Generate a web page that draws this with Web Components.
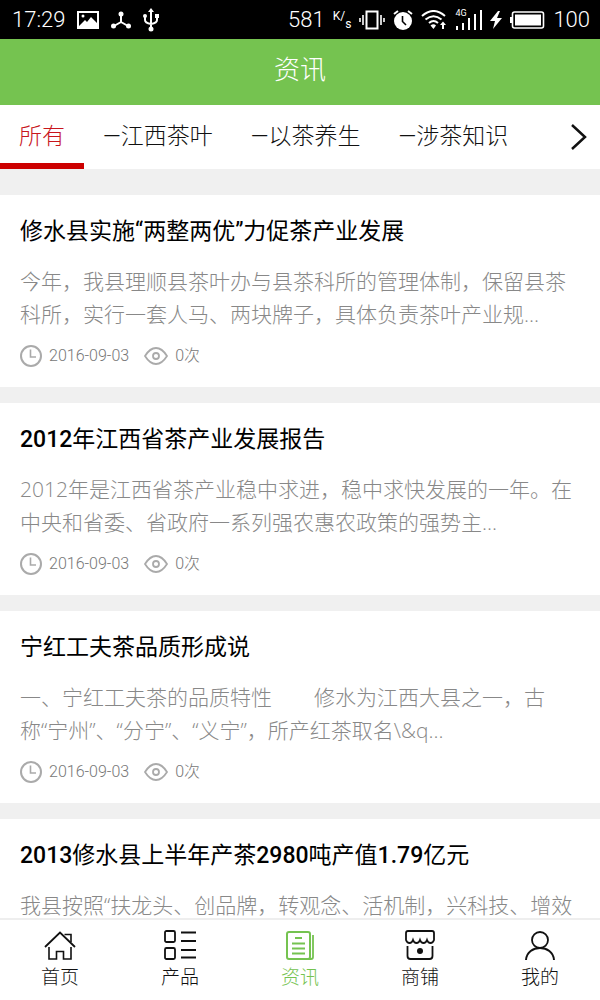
<!DOCTYPE html>
<html lang="zh-CN">
<head>
<meta charset="utf-8">
<meta name="viewport" content="width=device-width, initial-scale=1">
<title>资讯</title>
<style>
html, body {
    margin: 0;
    height: 100%;
}
body {
    font-family: Roboto, "Noto Sans CJK SC", sans-serif;
    color: #111;
    background: #f0f0f0;
}
b {
    font-weight: 500;
}
</style>
</head>
<body>
<news-app>
    <status-bar slot="top" time="17:29" speed="581" battery="100"></status-bar>
    <title-bar slot="top">资讯</title-bar>
    <tab-strip slot="top">
        <tab-item active>所有</tab-item>
        <tab-item>—江西茶叶</tab-item>
        <tab-item>—以茶养生</tab-item>
        <tab-item>—涉茶知识</tab-item>
    </tab-strip>

    <news-card date="2016-09-03" views="0">
        <span slot="title">修水县实施“两整两优”力促茶产业发展</span>
        今年，我县理顺县茶叶办与县茶科所的管理体制，保留县茶科所，实行一套人马、两块牌子，具体负责茶叶产业规...
    </news-card>
    <news-card date="2016-09-03" views="0">
        <span slot="title"><b>2012</b>年江西省茶产业发展报告</span>
        2012年是江西省茶产业稳中求进，稳中求快发展的一年。在中央和省委、省政府一系列强农惠农政策的强势主...
    </news-card>
    <news-card date="2016-09-03" views="0">
        <span slot="title">宁红工夫茶品质形成说</span>
        一、宁红工夫茶的品质特性　　修水为江西大县之一，古<br>称“宁州”、“分宁”、“义宁”，所产红茶取名\&amp;q...
    </news-card>
    <news-card>
        <span slot="title"><b>2013</b>修水县上半年产茶<b>2980</b>吨产值<b>1.79</b>亿元</span>
        我县按照“扶龙头、创品牌，转观念、活机制，兴科技、增效
    </news-card>

    <nav-bar slot="bottom">
        <nav-item icon="home">首页</nav-item>
        <nav-item icon="list">产品</nav-item>
        <nav-item icon="news" active>资讯</nav-item>
        <nav-item icon="shop">商铺</nav-item>
        <nav-item icon="user">我的</nav-item>
    </nav-bar>
</news-app>

<script>
const svg = (w, h, body) =>
    `<svg width="${w}" height="${h}" viewBox="0 0 ${w} ${h}" fill="none" stroke="currentColor" aria-hidden="true">${body}</svg>`

const icons = {
    picture: svg(22, 18, `<path d="M1 1H21V17H1Z" stroke-width="2"/>
        <path d="M2 15 8 9 10 11 14 6 20 12V16H2Z" fill="currentColor" stroke="none"/>
        <circle cx="6" cy="5" r="1.5" fill="currentColor" stroke="none"/>`),
    share: svg(20, 18, `<path d="M10 3V11L3 15M10 11 17 15" stroke-width="2"/>
        <g fill="currentColor" stroke="none"><circle cx="10" cy="3" r="2.5"/><circle cx="2.5" cy="15" r="2.5"/><circle cx="17.5" cy="15" r="2.5"/></g>`),
    usb: svg(16, 24, `<path d="M8 3V20M2 8V12Q2 15 8 16Q14 15 14 12V8" stroke-width="2"/>
        <g fill="currentColor" stroke="none"><path d="M8 0 11 4H5Z"/><circle cx="2" cy="8" r="2"/><path d="M12 6H16V10H12Z"/><circle cx="8" cy="21" r="2.5"/></g>`),
    vibrate: svg(26, 20, `<path d="M7.5 1.5H18.5V18.5H7.5Z" stroke-width="2"/><path d="M4 5V15M22 5V15M1 8V12M25 8V12" stroke-width="1.6"/>`),
    alarm: svg(20, 20, `<circle cx="10" cy="11" r="9" fill="currentColor" stroke="none"/>
        <path d="M1 4 5 1M19 4 15 1" stroke-width="2"/><path d="M9.5 6V11.5L13 15" stroke="#000" stroke-width="1.6"/>`),
    wifi: svg(26, 20, `<path d="M1 6Q12.500-4 24 6M4.500 9.500Q12.500 3 20.500 9.500M8 13Q12.500 9 17 13" stroke-width="2"/>
        <path d="M9.500 15.500Q12.500 13 15 15.500L12.500 19Z" fill="currentColor" stroke="none"/>
        <path d="M22 19V13" stroke-width="2"/><path d="M22 11.500 25 15H19Z" fill="currentColor" stroke="none"/>`),
    signal: svg(27, 20, `<path d="M2 20V16M8 20V13M14 20V8M20 20V4M26 20V0" stroke-width="2"/>`),
    bolt: svg(12, 18, `<path d="M8 0 0 10H5L3 18 12 7H7L10 0Z" fill="currentColor" stroke="none"/>`),
    battery: svg(35, 18, `<rect x="2.500" y="1" width="31" height="16" rx="2" stroke-width="1.600"/>
        <path d="M5 3.500H31V14.500H5Z" fill="currentColor" stroke="none"/><path d="M1 6V12" stroke-width="2"/>`),
    clock: svg(22, 22, `<circle cx="11" cy="11" r="10" stroke-width="2"/><path d="M10.500 4.500V12H16" stroke-width="1.600"/>`),
    eye: svg(24, 18, `<path d="M1 9Q6 1 12 1T23 9Q18 17 12 17T1 9Z" stroke-width="1.800"/><circle cx="12" cy="9" r="3" stroke-width="1.800"/>`),
    next: svg(18, 28, `<path d="M2 2 15 14 2 26" stroke-width="2.500"/>`),
    home: svg(32, 30, `<path d="M1 17 16 2.500 31 17" stroke-width="1.800"/><path d="M20.500 4.500H27V12M5 17V29H12.500V21.500H19.500V29H27V17" stroke-width="1.600"/>`),
    list: svg(32, 30, `<g stroke-width="1.800"><rect x="1" y="1" width="10" height="11" rx="1.500"/><rect x="1" y="18" width="10" height="11" rx="1.500"/>
        <path d="M17 2.500H32M17 11H32M17 20H32M17 27.500H32"/></g>`),
    news: svg(30, 30, `<rect x="2" y="2" width="23" height="27" rx="2" stroke-width="2"/><path d="M28 5V27Q28 29 26 29H22" stroke-width="1.800"/>
        <path d="M10 8H17M7 13.500H20M7 18.500H20M7 23.500H20" stroke-width="2"/>`),
    shop: svg(30, 30, `<g stroke-width="1.800"><path d="M3 1H27Q29 1 29 3V10Q28 13 25.500 13T22 10Q21 13 18.500 13T15 10Q14 13 11.500 13T8 10Q7 13 4.500 13T1 10V3Q1 1 3 1Z"/>
        <path d="M2.500 16V26Q2.500 29 5.500 29H24.500Q27.500 29 27.500 26V16"/></g><circle cx="15" cy="21" r="3" fill="currentColor" stroke="none"/>`),
    user: svg(30, 30, `<circle cx="15" cy="10" r="8" stroke-width="1.800"/><path d="M1 30C2 14 28 14 29 30" stroke-width="2"/>`)
}

class BaseElement extends HTMLElement {
    constructor(){
        super()
        this.attachShadow({mode: 'open'})
    }

    connectedCallback(){
        this.shadowRoot.innerHTML = `<style>
            :host { display: block; box-sizing: border-box; }
            * { box-sizing: border-box; }
            svg { display: block; flex: none; }
            button { font: inherit; color: inherit; background: none; border: 0; padding: 0; }
            ${this.css()}
        </style>${this.html()}`
    }
}

class NewsApp extends BaseElement {
    css(){
        return `
        :host { display: flex; flex-direction: column; height: 100vh; }
        main {
            flex: 1;
            min-height: 0;
            overflow-y: auto;
            scrollbar-width: none;
            display: flex;
            flex-direction: column;
            gap: 16px;
            padding-top: 26px;
        }`
    }

    html(){
        return `<header><slot name="top"></slot></header><main><slot></slot></main><slot name="bottom"></slot>`
    }
}

class StatusBar extends BaseElement {
    css(){
        return `
        :host { background: #000; color: #fff; font-weight: 300; font-size: 22px; line-height: 39px; }
        .bar, .group { display: flex; align-items: center; }
        .bar { justify-content: space-between; padding: 0 10px 0 12px; }
        .group { gap: 12px; }
        .right { gap: 8px; }
        .unit, .cell { display: flex; font-weight: 400; line-height: 12px; }
        .unit { font-size: 12px; }
        .unit span:last-child { padding-top: 8px; }
        .cell { flex-direction: column; position: relative; }
        .cell span { position: absolute; top: -1px; left: 0; font-size: 9px; line-height: 9px; }`
    }

    html(){
        return `<div class="bar">
            <div class="group"><span>${this.getAttribute('time')}</span>${icons.picture}${icons.share}${icons.usb}</div>
            <div class="group right">
                <span>${this.getAttribute('speed')}</span>
                <span class="unit"><span>K</span><span>/</span><span>s</span></span>
                ${icons.vibrate}${icons.alarm}${icons.wifi}
                <span class="cell"><span>4G</span>${icons.signal}</span>
                ${icons.bolt}${icons.battery}
                <span>${this.getAttribute('battery')}</span>
            </div>
        </div>`
    }
}

class TitleBar extends BaseElement {
    css(){
        return `
        :host { background: #75c350; color: #fff; text-align: center; padding: 11px 0 15px; }
        h1 { margin: 0; font-size: 26px; line-height: 40px; font-weight: 300; }`
    }

    html(){
        return `<h1><slot></slot></h1>`
    }
}

class TabStrip extends BaseElement {
    css(){
        return `
        :host { display: flex; align-items: center; justify-content: space-between; background: #fff; padding-right: 12px; }
        nav { display: flex; min-width: 0; overflow: hidden; }
        button { flex: none; }`
    }

    html(){
        return `<nav><slot></slot></nav><button type="button" aria-label="更多">${icons.next}</button>`
    }
}

class TabItem extends BaseElement {
    css(){
        return `
        button {
            display: block;
            padding: 16px 19px 10px;
            border-bottom: 6px solid transparent;
            font-size: 23px;
            line-height: 32px;
            font-weight: 300;
            white-space: nowrap;
        }
        :host([active]) button { color: #c8161d; border-color: #cc0000; }`
    }

    html(){
        return `<button type="button"><slot></slot></button>`
    }
}

class NewsCard extends BaseElement {
    css(){
        return `
        :host { flex: none; background: #fff; padding: 22px 20px 20px; }
        h2 { margin: 0 0 18px; font-size: 23px; line-height: 30px; font-weight: 400; color: #000; }
        p { margin: 0; font-family: "Open Sans", "Noto Sans CJK SC", sans-serif; font-size: 21px; line-height: 33px; font-weight: 300; color: #888; }
        .meta { display: flex; align-items: center; margin-top: 14px; gap: 7px; font-size: 16px; line-height: 22px; font-weight: 300; color: #777; }
        .meta svg { color: #aaa; }
        time { margin-right: 8px; }`
    }

    html(){
        const date = this.getAttribute('date')
        const meta = date ? `<div class="meta">${icons.clock}<time>${date}</time>${icons.eye}<span>${this.getAttribute('views')}次</span></div>` : ''
        return `<h2><slot name="title"></slot></h2><p><slot></slot></p>${meta}`
    }
}

class NavBar extends BaseElement {
    css(){
        return `
        :host { background: #fff; border-top: 2px solid #eee; }
        nav { display: flex; }`
    }

    html(){
        return `<nav><slot></slot></nav>`
    }
}

class NavItem extends BaseElement {
    css(){
        return `
        :host { flex: 1; color: #111; }
        :host([active]) { color: #75c350; }
        a {
            display: flex;
            flex-direction: column;
            align-items: center;
            gap: 5px;
            padding: 10px 0 9px;
            color: inherit;
            text-decoration: none;
            font-size: 19px;
            line-height: 26px;
            font-weight: 300;
        }`
    }

    html(){
        return `<a href="#${this.getAttribute('icon')}">${icons[this.getAttribute('icon')]}<span><slot></slot></span></a>`
    }
}

customElements.define('news-app', NewsApp)
customElements.define('status-bar', StatusBar)
customElements.define('title-bar', TitleBar)
customElements.define('tab-strip', TabStrip)
customElements.define('tab-item', TabItem)
customElements.define('news-card', NewsCard)
customElements.define('nav-bar', NavBar)
customElements.define('nav-item', NavItem)
</script>
</body>
</html>
